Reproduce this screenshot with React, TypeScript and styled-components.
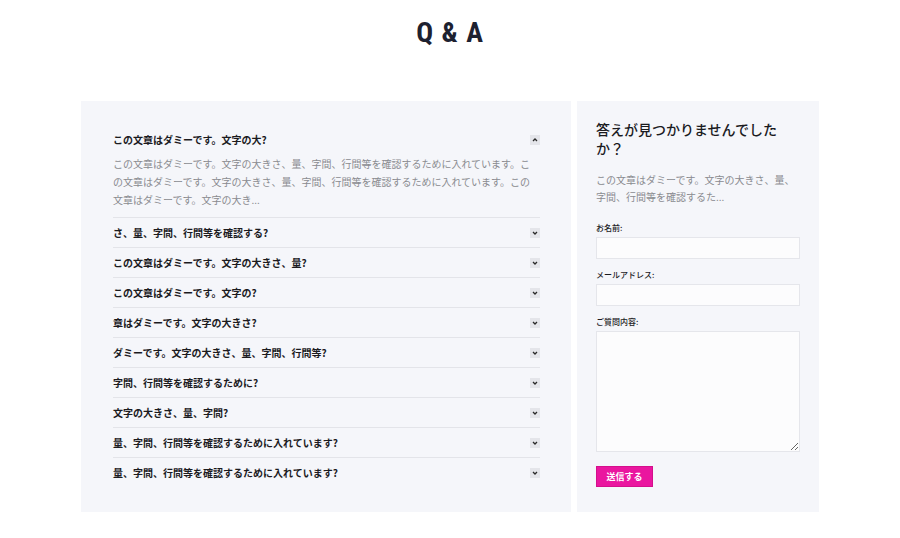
import * as React from 'react';
import styled, { createGlobalStyle } from 'styled-components';

interface Faq {
  question: string;
  answer?: string;
}

const faqs: Faq[] = [
  {
    question: 'この文章はダミーです。文字の大?',
    answer:
      'この文章はダミーです。文字の大きさ、量、字間、行間等を確認するために入れています。この文章はダミーです。文字の大きさ、量、字間、行間等を確認するために入れています。この文章はダミーです。文字の大き...',
  },
  { question: 'さ、量、字間、行間等を確認する?' },
  { question: 'この文章はダミーです。文字の大きさ、量?' },
  { question: 'この文章はダミーです。文字の?' },
  { question: '章はダミーです。文字の大きさ?' },
  { question: 'ダミーです。文字の大きさ、量、字間、行間等?' },
  { question: '字間、行間等を確認するために?' },
  { question: '文字の大きさ、量、字間?' },
  { question: '量、字間、行間等を確認するために入れています?' },
  { question: '量、字間、行間等を確認するために入れています?' },
];

const Global = createGlobalStyle`
  body {
    margin: 0;
    background: #fff;
    font-family: "Noto Sans CJK JP", "Noto Sans", sans-serif;
  }
`;

function Chevron({ open }: { open: boolean }) {
  return (
    <S.Toggle>
      <svg width="10" height="10" viewBox="0 0 10 10">
        <path
          d={open ? 'M3 6 L5 4 L7 6' : 'M3 4 L5 6 L7 4'}
          fill="none"
          stroke="#2a2a2a"
          strokeWidth="1.3"
        />
      </svg>
    </S.Toggle>
  );
}

export default function App() {
  return (
    <>
      <Global />
      <S.Page>
        <S.Title>Q &amp; A</S.Title>
        <S.Layout>
          <S.FaqPanel>
            {faqs.map((faq, i) => (
              <S.Item key={i} last={i === faqs.length - 1}>
                <S.Question>
                  <span>{faq.question}</span>
                  <Chevron open={!!faq.answer} />
                </S.Question>
                {faq.answer && <S.Answer>{faq.answer}</S.Answer>}
              </S.Item>
            ))}
          </S.FaqPanel>
          <S.ContactPanel>
            <h2>答えが見つかりませんでしたか？</h2>
            <p>この文章はダミーです。文字の大きさ、量、字間、行間等を確認するた...</p>
            <S.Form onSubmit={(e) => e.preventDefault()}>
              <label>
                お名前:
                <S.Input type="text" />
              </label>
              <label>
                メールアドレス:
                <S.Input type="email" />
              </label>
              <label>
                ご質問内容:
                <S.TextArea />
              </label>
              <S.Submit type="submit">送信する</S.Submit>
            </S.Form>
          </S.ContactPanel>
        </S.Layout>
      </S.Page>
    </>
  );
}

const S = {
  Page: styled.div`
    padding-top: 15px;
  `,
  Title: styled.h1`
    margin: 0 0 50px;
    text-align: center;
    font-family: "Roboto Condensed", "Liberation Sans Narrow", "DejaVu Sans Condensed", Roboto, sans-serif;
    font-weight: 700;
    font-size: 28px;
    line-height: 36px;
    letter-spacing: 1px;
    color: #1d2130;
  `,
  Layout: styled.div`
    width: 738px;
    margin: 0 auto;
    display: grid;
    grid-template-columns: 490px 242px;
    gap: 6px;
  `,
  FaqPanel: styled.div`
    background: #f5f6fa;
    padding: 24px 31px 24px 32px;
  `,
  Item: styled.div<{ last?: boolean }>`
    border-bottom: ${(p) => (p.last ? '1px solid transparent' : '1px solid #e3e4e9')};
  `,
  Question: styled.div`
    height: 29px;
    display: flex;
    align-items: center;
    justify-content: space-between;
    font-size: 10px;
    font-weight: 700;
    color: #1b1b1f;
  `,
  Toggle: styled.span`
    width: 10px;
    height: 10px;
    background: #e4e5ea;
    display: flex;
    align-items: center;
    justify-content: center;
  `,
  Answer: styled.p`
    margin: 0;
    padding: 1px 0 8px;
    font-size: 10px;
    line-height: 18px;
    color: #8a8b90;
  `,
  ContactPanel: styled.div`
    background: #f5f6fa;
    padding: 19px 19px 25px;

    & h2 {
      margin: 0;
      font-size: 14px;
      font-weight: 500;
      line-height: 19px;
      color: #1b1b1f;
    }

    & p {
      margin: 13px 0 0;
      font-size: 10px;
      line-height: 17px;
      color: #8a8b90;
    }
  `,
  Form: styled.form`
    margin-top: 16px;
    display: flex;
    flex-direction: column;
    align-items: flex-start;
    gap: 9px;

    & label {
      width: 100%;
      display: flex;
      flex-direction: column;
      gap: 3px;
      font-size: 8px;
      line-height: 13px;
      font-weight: 500;
      color: #1b1b1f;
    }
  `,
  Input: styled.input`
    box-sizing: border-box;
    width: 100%;
    height: 22px;
    margin: 0;
    border: 1px solid #e5e6eb;
    background: #fcfcfd;
    outline: none;
  `,
  TextArea: styled.textarea`
    box-sizing: border-box;
    width: 100%;
    height: 121px;
    margin: 0;
    border: 1px solid #e5e6eb;
    background: #fcfcfd;
    outline: none;
  `,
  Submit: styled.button`
    margin-top: 5px;
    width: 57px;
    height: 21px;
    padding: 0;
    border: 1px solid #d40f8c;
    background: #ea169f;
    color: #fff;
    font-family: "Noto Sans CJK JP", sans-serif;
    font-size: 9px;
    font-weight: 700;
    cursor: pointer;
  `,
};
